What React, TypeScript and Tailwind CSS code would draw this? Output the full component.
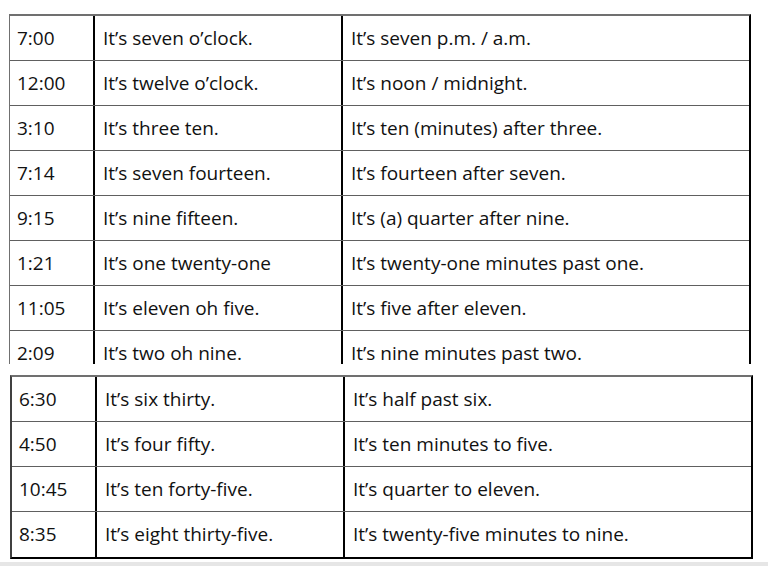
const top = [
  ["7:00", "It’s seven o’clock.", "It’s seven p.m. / a.m."],
  ["12:00", "It’s twelve o’clock.", "It’s noon / midnight."],
  ["3:10", "It’s three ten.", "It’s ten (minutes) after three."],
  ["7:14", "It’s seven fourteen.", "It’s fourteen after seven."],
  ["9:15", "It’s nine fifteen.", "It’s (a) quarter after nine."],
  ["1:21", "It’s one twenty-one", "It’s twenty-one minutes past one."],
  ["11:05", "It’s eleven oh five.", "It’s five after eleven."],
  ["2:09", "It’s two oh nine.", "It’s nine minutes past two."],
];

const bottom = [
  ["6:30", "It’s six thirty.", "It’s half past six."],
  ["4:50", "It’s four fifty.", "It’s ten minutes to five."],
  ["10:45", "It’s ten forty-five.", "It’s quarter to eleven."],
  ["8:35", "It’s eight thirty-five.", "It’s twenty-five minutes to nine."],
];

function Row({ cells, last }: { cells: string[]; last?: boolean }) {
  return (
    <div className={`flex h-[45px] leading-none ${last ? "" : "border-b-[1.5px] border-[#606060]"}`}>
      <div className="flex w-[85px] items-center border-r-2 border-black pl-[7px]">{cells[0]}</div>
      <div className="flex w-[248px] items-center border-r-2 border-black pl-[8px]">{cells[1]}</div>
      <div className="flex flex-1 items-center pl-[8px]">{cells[2]}</div>
    </div>
  );
}

export default function App() {
  return (
    <div
      className="relative h-[566px] w-[768px] overflow-hidden bg-white text-[19px] text-[#111]"
      style={{ fontFamily: '"Open Sans", "Noto Sans", sans-serif' }}
    >
      <div className="pt-[14px]">
        {/* upper table, cut off at the bottom */}
        <div className="ml-[9px] h-[350px] w-[742px] overflow-hidden border-l-[1.5px] border-r-2 border-t-2 border-l-[#707070] border-r-black border-t-[#707070]">
          {top.map((r, i) => (
            <Row key={i} cells={r} last={i === top.length - 1} />
          ))}
        </div>

        {/* lower table */}
        <div className="ml-[10px] mt-[11px] w-[743px] border-b-2 border-l-2 border-r-2 border-t-2 border-b-black border-l-[#404040] border-r-black border-t-[#707070]">
          {bottom.map((r, i) => (
            <Row key={i} cells={r} last={i === bottom.length - 1} />
          ))}
        </div>
      </div>
      <div className="absolute bottom-0 left-0 h-[4px] w-full bg-[#e6e6e6]" />
    </div>
  );
}
